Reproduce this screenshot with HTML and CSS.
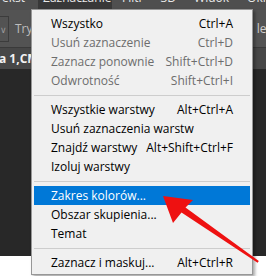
FILE: index.html
```html
<!DOCTYPE html>
<html lang="pl">
<head>
    <meta charset="UTF-8">
    <meta name="viewport" content="width=device-width, initial-scale=1.0">
    <title>Zaznaczanie</title>
    <link rel="stylesheet" href="styles.css">
</head>
<body>
    <div class="menubar">
        <span class="menubar-item first">ekst</span>
        <span class="menubar-item open">Zaznaczanie</span>
        <span class="menubar-item">Filtr</span>
        <span class="menubar-item">3D</span>
        <span class="menubar-item">Widok</span>
        <span class="menubar-item">Okno</span>
    </div>

    <div class="options-bar">
        <div class="mode-box">&#8744;</div>
        <span class="mode-label">Tryb</span>
        <span class="options-right">lera</span>
    </div>

    <div class="tab-bar">
        <span class="tab-title">a 1,CMYK</span>
    </div>

    <div class="canvas"></div>

    <div class="dropdown">
        <div class="menu-row"><span>Wszystko</span><span>Ctrl+A</span></div>
        <div class="menu-row disabled"><span>Usuń zaznaczenie</span><span>Ctrl+D</span></div>
        <div class="menu-row disabled"><span>Zaznacz ponownie</span><span>Shift+Ctrl+D</span></div>
        <div class="menu-row disabled"><span>Odwrotność</span><span>Shift+Ctrl+I</span></div>
        <div class="menu-sep"></div>
        <div class="menu-row"><span>Wszystkie warstwy</span><span>Alt+Ctrl+A</span></div>
        <div class="menu-row"><span>Usuń zaznaczenia warstw</span><span></span></div>
        <div class="menu-row"><span>Znajdź warstwy</span><span>Alt+Shift+Ctrl+F</span></div>
        <div class="menu-row"><span>Izoluj warstwy</span><span></span></div>
        <div class="menu-sep"></div>
        <div class="menu-row active"><span>Zakres kolorów...</span><span></span></div>
        <div class="menu-row"><span>Obszar skupienia...</span><span></span></div>
        <div class="menu-row"><span>Temat</span><span></span></div>
        <div class="menu-sep"></div>
        <div class="menu-row"><span>Zaznacz i maskuj...</span><span>Alt+Ctrl+R</span></div>
    </div>

    <!-- red pointer drawn over the screenshot -->
    <svg class="pointer" width="266" height="276" viewBox="0 0 266 276">
        <polygon points="163,196 193,200 185.5,207.5 258.8,261 257.6,262.8 181.5,212.5 173,223" fill="#ee1111"/>
    </svg>
</body>
</html>
```

FILE: styles.css
```css
* {
    margin: 0;
    padding: 0;
    box-sizing: border-box;
}

body {
    width: 266px;
    height: 276px;
    overflow: hidden;
    background: #ffffff;
    font-family: 'Open Sans', 'Noto Sans', sans-serif;
    font-size: 12px;
    position: relative;
}

.menubar {
    height: 10px;
    background: #4f4f4f;
    display: flex;
    overflow: hidden;
}

.menubar-item {
    color: #e8e8e8;
    line-height: 14px;
    margin-top: -9px;
    padding: 0 5px;
    height: 19px;
}

.menubar-item.first {
    margin-left: -3px;
    margin-right: 8px;
}

.menubar-item.open {
    background: #383838;
    width: 74px;
    padding-left: 5px;
    margin-right: 5px;
}

.menubar-item:nth-child(3) {
    margin-right: 7px;
}

.menubar-item:nth-child(4) {
    margin-right: 8px;
}

.menubar-item:nth-child(5) {
    margin-right: 8px;
}

.options-bar {
    height: 38px;
    background: #535353;
    display: flex;
    align-items: center;
    color: #bdbdbd;
    border-bottom: 1px solid #3a3a3a;
}

.mode-box {
    width: 9px;
    height: 26px;
    border: 1px solid #3c3c3c;
    border-left: none;
    color: #9a9a9a;
    font-size: 9px;
    line-height: 26px;
    text-align: right;
    padding-right: 1px;
    overflow: hidden;
}

.mode-label {
    margin-left: 6px;
    flex: 1;
}

.options-right {
    color: #cfcfcf;
    margin-right: -12px;
}

.tab-bar {
    height: 21px;
    background: #474747;
    display: flex;
    align-items: center;
}

.tab-title {
    color: #f2f2f2;
    font-weight: bold;
    margin-left: -1px;
}

.canvas {
    height: 187px;
    background: #282828;
}

.dropdown {
    position: absolute;
    left: 31px;
    top: 9px;
    width: 222px;
    background: #f0f0f0;
    border: 1px solid #979797;
    padding: 4px 2px 2px;
    box-shadow: 2px 2px 3px rgba(0, 0, 0, 0.35);
}

.menu-row {
    height: 19px;
    line-height: 19px;
    display: flex;
    justify-content: space-between;
    padding: 0 17px;
    color: #000000;
    white-space: nowrap;
}

.menu-row.disabled {
    color: #6d6d6d;
}

.menu-row.active {
    background: #0078d7;
    color: #ffffff;
}

.menu-sep {
    height: 1px;
    background: #cdcdcd;
    margin: 5px 0 4px;
}

.pointer {
    position: absolute;
    left: 0;
    top: 0;
    pointer-events: none;
}
```
